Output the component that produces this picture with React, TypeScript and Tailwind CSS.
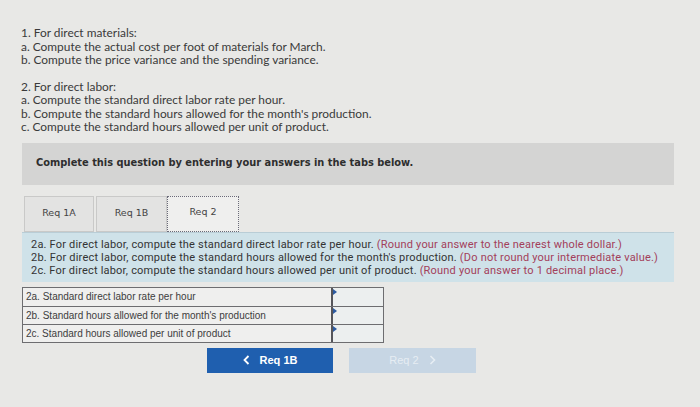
import React from 'react'

const rows = [
  '2a. Standard direct labor rate per hour',
  "2b. Standard hours allowed for the month's production",
  '2c. Standard hours allowed per unit of product',
]

export default function App() {
  return (
    <div className="w-[700px] h-[407px] overflow-hidden bg-[#e8e8e6] pl-[21px] pt-[26px] text-[#3a3a3a]">
      <div className="font-['Lato',sans-serif] text-[11.9px] leading-[13.5px]">
        <p>1. For direct materials:</p>
        <p>a. Compute the actual cost per foot of materials for March.</p>
        <p>b. Compute the price variance and the spending variance.</p>
        <p className="mt-[13px]">2. For direct labor:</p>
        <p>a. Compute the standard direct labor rate per hour.</p>
        <p>b. Compute the standard hours allowed for the month's production.</p>
        <p>c. Compute the standard hours allowed per unit of product.</p>
      </div>

      <div className="mt-[9px] ml-px w-[652px] h-[42px] bg-[#d4d4d3] flex items-center pl-[14px]">
        <p className="font-['DejaVu_Sans',sans-serif] font-bold text-[9.85px] text-[#2e2e2e]">
          Complete this question by entering your answers in the tabs below.
        </p>
      </div>

      <div className="mt-[11px] ml-[3px] flex h-[36px] font-['DejaVu_Sans',sans-serif] text-[9.5px] text-[#444]">
        <div className="w-[70px] border border-[#c9c9c8] bg-[#e3e3e2] flex items-center justify-center">Req 1A</div>
        <div className="ml-[2px] w-[71px] border border-[#c9c9c8] bg-[#e3e3e2] flex items-center justify-center">Req 1B</div>
        <div className="w-[72px] border border-dotted border-[#6a6a78] bg-[#efefee] flex items-center justify-center pb-[3px]">Req 2</div>
      </div>

      <div className="ml-px w-[652px] h-[50px] bg-[#cfe2e9] border-t border-[#b9cdd6] pl-[9px] pt-[5px] font-['Roboto',sans-serif] text-[11px] leading-[13px] tracking-[0.2px] text-[#333]">
        <p>2a. For direct labor, compute the standard direct labor rate per hour. <span className="text-[#a3405a]">(Round your answer to the nearest whole dollar.)</span></p>
        <p>2b. For direct labor, compute the standard hours allowed for the month's production. <span className="text-[#a3405a]">(Do not round your intermediate value.)</span></p>
        <p>2c. For direct labor, compute the standard hours allowed per unit of product. <span className="text-[#a3405a]">(Round your answer to 1 decimal place.)</span></p>
      </div>

      <div className="mt-[5px] ml-px w-[362px] border border-[#6d6d70] font-['Liberation_Sans',sans-serif] text-[10px] text-[#3d3d3d]">
        {rows.map((r, i) => (
          <div key={r} className={`flex h-[18px] ${i > 0 ? 'border-t border-[#6d6d70]' : ''}`}>
            <div className="flex-1 bg-[#efefee] flex items-center pl-[3px]">{r}</div>
            <div className="relative w-[52px] border-l-2 border-[#55555a] bg-[#ecefef]">
              <div className="absolute left-0 top-[1px] w-0 h-0 border-y-[3px] border-y-transparent border-l-[4px] border-l-[#2c5aa0]" />
            </div>
          </div>
        ))}
      </div>

      <div className="mt-[5px] ml-[186px] flex gap-[16px] font-['Liberation_Sans',sans-serif] font-bold text-[11px]">
        <div className="w-[126px] h-[25px] bg-[#1f5faf] text-white flex items-center justify-center gap-[10px]">
          <svg width="7" height="10" viewBox="0 0 7 10" fill="none" stroke="white" strokeWidth="1.8"><path d="M5.5 1 L1.5 5 L5.5 9" /></svg>
          <span>Req 1B</span>
        </div>
        <div className="w-[127px] h-[25px] bg-[#c7d6e4] text-[#e6edf3] flex items-center justify-center gap-[10px] font-normal">
          <span>Req 2</span>
          <svg width="7" height="10" viewBox="0 0 7 10" fill="none" stroke="#e6edf3" strokeWidth="1.6"><path d="M1.5 1 L5.5 5 L1.5 9" /></svg>
        </div>
      </div>
    </div>
  )
}
